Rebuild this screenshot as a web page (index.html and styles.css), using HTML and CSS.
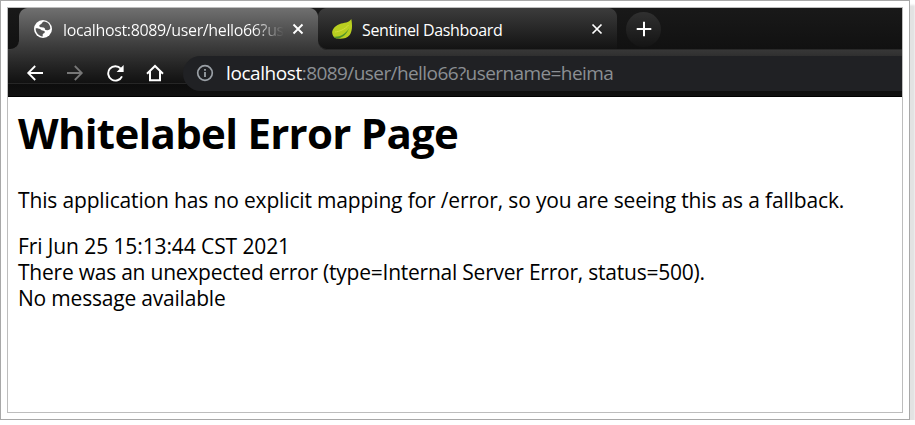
FILE: index.html
```html
<!DOCTYPE html>
<html lang="en">
<head>
<meta charset="utf-8">
<title>Whitelabel Error Page</title>
<link rel="stylesheet" href="styles.css">
</head>
<body>
<div class="frame">
  <div class="window">
    <header class="chrome">
      <div class="tabs">
        <div class="edge"></div>
        <div class="tab active">
          <svg class="globe" width="20" height="20" viewBox="0 0 20 20"><circle cx="10" cy="10" r="9" fill="#fff"/><path d="M10.8 2.6C8.700 3.400 9.200 5 7.300 5.600 5.600 6.200 6.200 8 7.600 8.200 9.500 8.400 11.800 8 12 10.100c.1 1.100 1.300 1.200 2.500 1.100 1.300-.1 2.200-.5 2.800-1.400C17.500 6 14.900 2.800 10.800 2.600zM2.700 9.200c-.3 4 2.800 7.900 7 8.200v-1.500c0-.8.5-1.300 1.400-1.600.8-.3 1-1.700.2-2.200-.9-.6-2.800-.5-3.400-1.400C7.200 9.700 5.200 9.200 2.700 9.200z" fill="#555"/></svg>
          <span class="tab-title fade">localhost:8089/user/hello66?us</span>
          <svg class="close" width="12" height="12" viewBox="0 0 12 12"><path d="M1.500 1.500l9 9m0-9l-9 9" stroke="#fff" stroke-width="1.900"/></svg>
        </div>
        <div class="tab idle">
          <svg class="leaf" width="22" height="22" viewBox="0 0 22 22"><path d="M20.300 1c-2.500 4-7 3.300-12 5.200C3.500 8 .8 12 1.200 15c.2 2.600 1.700 4.500 3.500 5.300 4.500.9 11 .8 14-3.300 2.400-3.300 3-9 1.600-16z" fill="#b9cf20"/><path d="M2.500 18.700c7 .5 12-3 15.600-8.200-2.600 5.900-7 9.800-12.600 10z" fill="#4d932c"/><path d="M4 14c4-.3 10-2.500 13.500-7" stroke="#d3df3c" fill="none"/></svg>
          <span class="tab-title second">Sentinel Dashboard</span>
          <svg class="close" width="12" height="12" viewBox="0 0 12 12"><path d="M1.500 1.500l9 9m0-9l-9 9" stroke="#fff" stroke-width="1.700"/></svg>
        </div>
        <div class="new-tab"><svg width="16" height="16" viewBox="0 0 16 16"><path d="M8 .7v14.600M.7 8h14.600" stroke="#fff" stroke-width="2"/></svg></div>
        <div class="strip"></div>
      </div>
      <div class="toolbar">
        <nav class="nav">
          <svg width="18" height="18" viewBox="0 0 18 18"><path d="M17 9H2.300M9.200 2L2.200 9l7 7" fill="none" stroke="#fff" stroke-width="1.800"/></svg>
          <svg width="18" height="18" viewBox="0 0 18 18"><path d="M1 9h14.700M8.800 2l7 7-7 7" fill="none" stroke="#777" stroke-width="1.800"/></svg>
          <svg width="18" height="18" viewBox="0 0 18 18"><path d="M16 12.300A7.200 7.200 0 1 1 14.800 4.600" fill="none" stroke="#fff" stroke-width="1.900"/><path d="M17.600 1v7h-7z" fill="#fff"/></svg>
          <svg width="18" height="18" viewBox="0 0 18 18"><path d="M1 9.700L9 2l8 7.700M4 7.500v8.700h10V7.500" fill="none" stroke="#fff" stroke-width="2"/></svg>
        </nav>
        <div class="address">
          <svg width="18" height="18" viewBox="0 0 18 18"><circle cx="9" cy="9" r="7.300" fill="none" stroke="#9aa0a6" stroke-width="1.700"/><path d="M9 8v5M9 5v1.800" stroke="#9aa0a6" stroke-width="1.800"/></svg>
          <span class="url"><b>localhost</b>:8089/user/hello66?username=heima</span>
        </div>
      </div>
    </header>
    <main>
      <h1>Whitelabel Error Page</h1>
      <p class="intro">This application has no explicit mapping for /error, so you are seeing this as a fallback.</p>
      <div class="date">Fri Jun 25 15:13:44 CST 2021</div>
      <div class="reason">There was an unexpected error (type=Internal Server Error, status=500).</div>
      <div class="message">No message available</div>
    </main>
  </div>
</div>
</body>
</html>
```
FILE: styles.css
```css
* { box-sizing: border-box; }
body { margin: 0; background: #fff; font-family: "Open Sans", "Noto Sans", sans-serif; overflow: hidden; }
svg { display: block; flex: none; }
.frame { width: 910px; height: 420px; border: 1px solid #a8a8a8; padding: 6px; background: #fff; box-shadow: 5px 5px 2px #e2e2e2; }
.window { width: 896px; height: 406px; border: 1px solid #bdbdbd; }
.chrome { height: 89px; background: linear-gradient(#707070 0, #575757 18px, #3c3c3c 38px, #262626 56px, #111 75px, #262626 75px, #262626 76px, #0d0d0d 76px, #111 88px, #000 88px); }
.tabs { height: 42px; display: flex; }
.edge { width: 11px; background: linear-gradient(#191919, #111); border-radius: 0 0 9px 0; border-bottom: 1px solid #3c3c3c; }
.tab { height: 42px; display: flex; align-items: center; }
.active {
  width: 299px;
  padding-left: 14px;
  background:
    radial-gradient(circle at 9px 9px, transparent 8.5px, #191919 9.5px) 0 0 / 9px 9px no-repeat,
    radial-gradient(circle at 0 9px, transparent 8.5px, #191919 9.5px) 100% 0 / 9px 9px no-repeat;
}
.idle {
  width: 299px;
  padding-left: 13px;
  background:
    radial-gradient(circle at 9px 9px, transparent 8.5px, #191919 9.5px) 0 0 / 9px 9px no-repeat,
    radial-gradient(circle at 0 9px, transparent 8.5px, #191919 9.5px) 100% 0 / 9px 9px no-repeat,
    linear-gradient(#3c3c3c, #121212);
  border-radius: 0 0 0 9px;
  box-shadow: inset 0 -1px #292929;
}
.tab-title { font-size: 16px; line-height: 22px; padding-top: 1px; color: #fff; white-space: nowrap; overflow: hidden; }
.fade { width: 221px; margin-left: 10px; letter-spacing: -.36px; background: linear-gradient(90deg, #fff 190px, transparent 221px); background-clip: text; color: transparent; }
.active .close { margin-left: 8px; }
.second { width: 221px; margin-left: 9px; letter-spacing: -.36px; }
.idle .close { margin-left: 8px; }
.new-tab { width: 53px; background: linear-gradient(#191919, #111); border-bottom: 1px solid #292929; display: grid; place-items: center; position: relative; }
.new-tab::before { content: ""; position: absolute; left: 9px; top: 4px; width: 35px; height: 35px; border-radius: 50%; background: linear-gradient(#303030, #141414); }
.new-tab svg { position: relative; }
.strip { flex: 1; background: linear-gradient(#191919, #111); border-bottom: 1px solid #292929; }
.toolbar { height: 47px; display: flex; padding-top: 6px; }
.nav { display: flex; align-items: center; gap: 22px; width: 175px; height: 34px; padding: 0 0 1px 18px; }
.address { flex: 1; height: 35px; background: #202124; border-radius: 18px 0 0 18px; display: flex; align-items: center; padding: 0 0 1px 13px; }
.url { margin-left: 12px; font-size: 19px; line-height: 26px; letter-spacing: -.58px; color: #8b8f93; white-space: nowrap; }
.url b { font-weight: 400; color: #fff; letter-spacing: -.42px; }
main { padding: 7px 0 0 11px; font-size: 21px; line-height: 26px; color: #000; white-space: nowrap; }
h1 { margin: 0 0 0 -1px; font-size: 42px; line-height: 58px; font-weight: 700; letter-spacing: -.72px; }
.intro { margin: 25px 0 20px -1px; letter-spacing: -.155px; }
.date { margin-left: -1px; letter-spacing: -.1px; }
.reason { margin-left: -1px; letter-spacing: -.23px; }
.message { margin-left: -1px; letter-spacing: -.2px; }
```
